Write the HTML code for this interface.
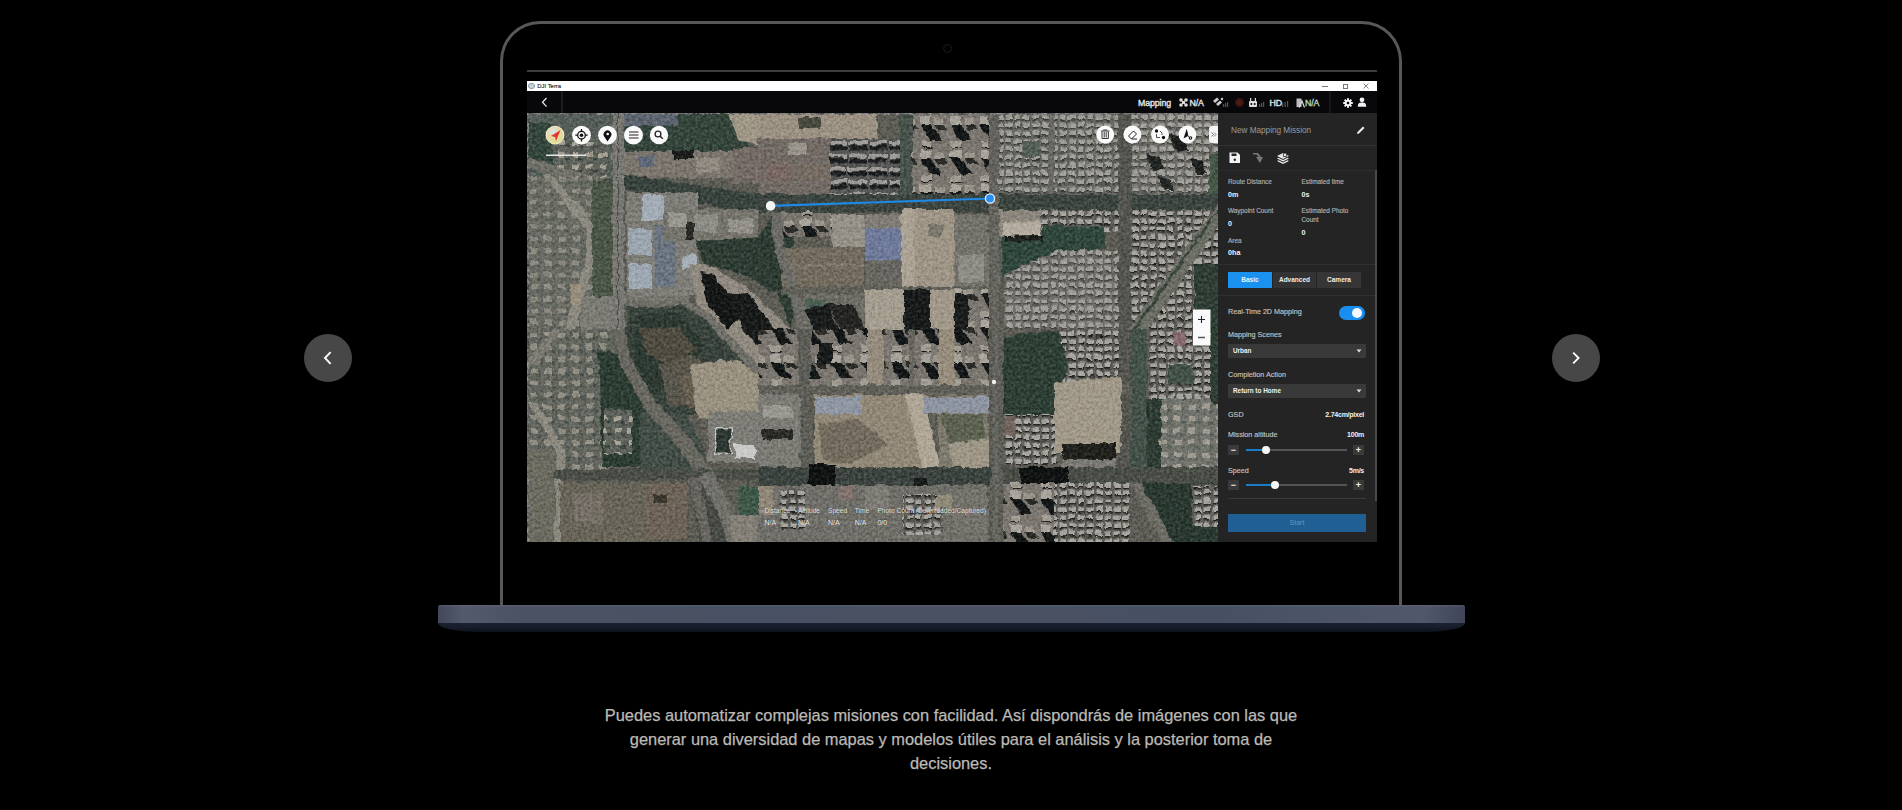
<!DOCTYPE html>
<html><head><meta charset="utf-8">
<style>
*{margin:0;padding:0;box-sizing:border-box}
html,body{width:1902px;height:810px;overflow:hidden;background:#000;font-family:"Liberation Sans",sans-serif}
.abs{position:absolute}
#lid{position:absolute;left:500px;top:21px;width:902px;height:600px;border:3px solid #585858;border-bottom:none;border-radius:40px 40px 0 0}
#cam{position:absolute;left:942.5px;top:44px;width:9px;height:9px;border-radius:50%;border:1.5px solid #1c1c1c}
#topline{position:absolute;left:527px;top:70px;width:850px;height:2px;background:#3c3c3c}
#titlebar{position:absolute;left:527px;top:80.5px;width:850px;height:10.5px;background:#fff}
#toolbar{position:absolute;left:527px;top:91px;width:850px;height:22px;background:#08080b}
#base{position:absolute;left:438px;top:605px;width:1027px;height:18px;background:linear-gradient(180deg,rgba(255,255,255,.07) 0,rgba(255,255,255,.03) 1.5px,rgba(0,0,0,0) 2px),linear-gradient(90deg,#434859 0%,#535a6c 2.5%,#4b5264 8%,#485063 30%,#4a5163 50%,#475063 75%,#50576a 96%,#40455a 100%);border-radius:2px 2px 0 0}
#base2{position:absolute;left:438px;top:623px;width:1027px;height:9px;background:linear-gradient(180deg,#1b2132 0%,#181d2b 50%,#0d1018 100%);border-radius:0 0 40px 40px/0 0 9px 9px}
.arrow{position:absolute;top:334px;width:48px;height:48px;border-radius:50%;background:#474747}
#caption{position:absolute;left:451px;top:703px;width:1000px;text-align:center;color:#bcbab6;font-size:16.4px;line-height:24px;-webkit-text-stroke:0.25px #bcbab6}
.tb{font-size:8.8px;line-height:11px;color:#e6e6e6;-webkit-text-stroke:0.35px #e6e6e6;letter-spacing:-0.1px}
.lbl{font-size:6.4px;line-height:9px;color:#b0b0b0;-webkit-text-stroke:0.15px #b0b0b0}
.val{font-size:7.2px;line-height:10px;color:#f0f0f0;font-weight:bold}
.valr{font-size:7px;line-height:10px;color:#f0f0f0;font-weight:bold;text-align:right;letter-spacing:-0.25px}
.lbl2{font-size:7.2px;line-height:10px;color:#c2c2c2;-webkit-text-stroke:0.15px #c2c2c2}
.tab{height:16px;font-size:6.5px;line-height:16px;text-align:center;color:#eee;font-weight:bold}
.dd{width:138px;height:14px;background:#393939;font-size:6.4px;line-height:14px;padding-left:5px;color:#f0f0f0;font-weight:bold}
.pm{width:11px;height:10.5px;background:#3a3a3a;color:#eee;font-size:9px;line-height:10.5px;text-align:center;font-weight:bold}
.st{font-size:6.6px;line-height:9px;color:#e8e8e8;text-shadow:0 0 1px rgba(0,0,0,.5)}
.sv{font-size:7px;line-height:10px;color:#f2f2f2;text-shadow:0 0 1px rgba(0,0,0,.5)}
</style></head>
<body>
<div id="lid"></div>
<div id="cam"></div>
<div id="topline"></div>
<div id="titlebar"></div>
<div id="toolbar"></div>
<svg class="abs" style="left:527px;top:113px;filter:brightness(0.9) contrast(1.15) saturate(0.85)" width="691" height="429" viewBox="0 0 691 429">
<defs>
  <pattern id="urb" width="9" height="8" patternUnits="userSpaceOnUse">
    <rect width="9" height="8" fill="#6d6c66"/>
    <rect x="0.5" y="0.5" width="6.5" height="4.5" fill="#b7b5af"/>
    <rect x="0.5" y="5" width="6.5" height="1.5" fill="#373834"/>
  </pattern>
  <pattern id="hr" width="30" height="34" patternUnits="userSpaceOnUse">
    <rect width="30" height="34" fill="#8d8880"/>
    <rect x="2" y="2" width="11" height="8" fill="#b9b5ab"/>
    <path d="M2 10 L13 10 L24 26 L12 26Z" fill="#262a2a"/>
    <rect x="16" y="4" width="10" height="6" fill="#aca79c"/>
    <path d="M16 10 L26 10 L30 16 L20 16Z" fill="#3d3e3a"/>
    <rect x="3" y="27" width="10" height="6" fill="#b3ada2"/>
    <path d="M3 33 L13 33 L14 34 L4 34Z" fill="#2e3232"/>
  </pattern>
  <pattern id="slab" width="20" height="13" patternUnits="userSpaceOnUse">
    <rect width="20" height="13" fill="#686867"/>
    <rect x="1" y="1" width="18" height="4.5" fill="#acaba8"/>
    <rect x="1" y="5.5" width="18" height="4" fill="#2e3132"/>
  </pattern>
  <pattern id="villa" width="14" height="12" patternUnits="userSpaceOnUse">
    <rect width="14" height="12" fill="#6f746c"/>
    <rect x="2" y="2" width="7" height="5" fill="#b5b0a2"/>
    <rect x="9" y="7" width="4" height="3" fill="#4e5a53"/>
  </pattern>
  <filter id="photo" x="0" y="0" width="691" height="429" filterUnits="userSpaceOnUse" color-interpolation-filters="sRGB">
    <feTurbulence type="turbulence" baseFrequency="0.08" numOctaves="2" seed="4" result="dt"/>
    <feDisplacementMap in="SourceGraphic" in2="dt" scale="5" xChannelSelector="R" yChannelSelector="G" result="disp"/>
    <feGaussianBlur in="disp" stdDeviation="0.45" result="b"/>
    <feTurbulence type="fractalNoise" baseFrequency="0.35" numOctaves="2" seed="11" result="t"/>
    <feColorMatrix in="t" type="matrix" values="0 0 0 0 0  0 0 0 0 0  0 0 0 0 0  0 0 0 0 1" result="dummy"/>
    <feColorMatrix in="t" type="matrix" values="0.6 0 0 0 0.2  0.6 0 0 0 0.2  0.6 0 0 0 0.2  0 0 0 0 1" result="g"/>
    <feBlend in="g" in2="b" mode="soft-light"/>
  </filter>
  <filter id="tex" x="0" y="0" width="100%" height="100%">
    <feTurbulence type="fractalNoise" baseFrequency="0.9" numOctaves="1" seed="5" result="n"/>
    <feColorMatrix in="n" type="matrix" values="0 0 0 0 0  0 0 0 0 0  0 0 0 0 0  0 0 0 -3 1.6"/>
  </filter>
</defs>
<g filter="url(#photo)">
<rect width="691" height="429" fill="#6f6e65"/>
<!-- ===== T1 (0-230, 0-215) ===== -->
<rect x="0" y="0" width="84" height="66" fill="#66706a"/>
<path d="M0 8 L22 8 L24 50 L0 52Z" fill="#45594e"/>
<rect x="27" y="27" width="53" height="37" fill="url(#villa)"/>
<path d="M0 44 L84 66 L84 76 L0 54Z" fill="#838279"/>
<rect x="0" y="62" width="64" height="153" fill="url(#villa)"/>
<rect x="0" y="62" width="64" height="153" fill="#86857c" opacity="0.5"/>
<path d="M14 60 L22 60 L68 112 L68 145 L46 215 L36 215 L58 145 L58 115Z" fill="#9d9a8f"/>
<rect x="64" y="66" width="20" height="120" fill="#5c6858"/>
<rect x="42" y="170" width="11" height="21" fill="#aa9f8b"/>
<rect x="53" y="183" width="31" height="32" fill="#8e8d84"/>
<rect x="96" y="0" width="124" height="37" fill="#45584d"/>
<rect x="96" y="0" width="54" height="11" fill="#6d7683"/>
<path d="M200 0 L230 0 L230 30 L210 28Z" fill="#b2a895"/>
<rect x="96" y="37" width="108" height="27" fill="#8d877e"/>
<rect x="110" y="42" width="16" height="10" fill="#6f7a8c"/>
<rect x="145" y="36" width="20" height="9" fill="#2d302f"/>
<rect x="168" y="44" width="24" height="14" fill="#a29b90"/>
<rect x="204" y="34" width="26" height="35" fill="#887c76"/>
<path d="M96 60 L230 80 L230 100 L96 76Z" fill="#4a5650"/>
<rect x="98" y="78" width="72" height="104" fill="#908e87"/>
<rect x="114" y="80" width="21" height="26" fill="#b2bdc8"/>
<rect x="100" y="115" width="23" height="26" fill="#abb7c2"/>
<rect x="100" y="150" width="23" height="24" fill="#aeb9c4"/>
<rect x="126" y="110" width="21" height="62" fill="#7b8794"/>
<rect x="155" y="142" width="13" height="13" fill="#b4c0c8"/>
<rect x="135" y="95" width="95" height="32" fill="#88867d"/>
<rect x="140" y="98" width="18" height="14" fill="#a9a79f"/>
<rect x="165" y="100" width="25" height="18" fill="#9e9d96"/>
<rect x="200" y="105" width="25" height="14" fill="#a5a29a"/>
<rect x="158" y="108" width="8" height="18" fill="#3b3c37"/>
<rect x="96" y="182" width="64" height="8" fill="#88877f"/>
<path d="M98 190 L156 189 L180 204 L204 232 L229 257 L262 276 L262 300 L230 310 L180 300 L140 300 L98 296Z" fill="#4a564e"/>
<path d="M110 200 L150 198 L175 230 L160 270 L120 280 L104 250Z" fill="#3e4d44"/>
<path d="M130 250 L165 240 L190 262 L175 290 L140 292Z" fill="#6b685c"/>
<path d="M112 215 L150 212 L168 236 L140 250 L118 240Z" fill="#625e50"/>
<path d="M150 262 L178 258 L186 290 L160 296Z" fill="#7a7060"/>
<path d="M162 250 L210 245 L235 265 L235 305 L170 305Z" fill="#aca28f"/>
<path d="M168 127 L230 122 L246 98 L262 98 L270 175 L262 215 L250 180 L215 160 L175 150Z" fill="#3e4f45"/>
<path d="M160 150 L178 150 L215 170 L262 215 L270 262 L250 268 L225 250 L200 225 L170 190Z" fill="#a29b90"/>
<path d="M172 158 L186 160 L214 200 L200 215 L180 190Z" fill="#262a29"/>
<path d="M200 180 L220 178 L250 220 L236 238 L215 215Z" fill="#2a2e2d"/>
<path d="M232 225 L250 222 L262 250 L252 262Z" fill="#2c302f"/>
<path d="M98 186 L158 185 L184 200 L208 228 L232 253 L264 272 L262 278 L228 260 L202 234 L178 207 L156 192 L98 193Z" fill="#828179"/>
<!-- ===== T2 (230-460, 0-215) ===== -->
<rect x="230" y="0" width="119" height="24" fill="#ada291"/>
<rect x="270" y="3" width="22" height="11" fill="#5a5c50"/>
<rect x="230" y="24" width="72" height="56" fill="#857c76"/>
<rect x="236" y="50" width="30" height="15" fill="#8c7973"/>
<rect x="270" y="50" width="30" height="16" fill="#897e74"/>
<rect x="260" y="28" width="18" height="12" fill="#aaa69c"/>
<rect x="302" y="24" width="69" height="58" fill="url(#slab)"/>
<rect x="371" y="0" width="13" height="90" fill="#58655d"/>
<rect x="384" y="0" width="76" height="82" fill="url(#hr)"/>
<rect x="230" y="80" width="461" height="18" fill="#4d5751"/>
<rect x="248" y="98" width="56" height="24" fill="url(#hr)"/>
<rect x="304" y="100" width="32" height="33" fill="#a6a297"/>
<rect x="254" y="133" width="81" height="39" fill="#857d6e"/>
<rect x="254" y="150" width="81" height="1.5" fill="#989081"/>
<rect x="336" y="114" width="39" height="32" fill="#7f8cb0"/>
<rect x="336" y="100" width="39" height="14" fill="#918e85"/>
<rect x="336" y="146" width="39" height="29" fill="#797871"/>
<rect x="373" y="95" width="13" height="80" fill="#bdb3a3"/>
<rect x="386" y="95" width="40" height="80" fill="#b1a695"/>
<rect x="400" y="110" width="15" height="12" fill="#8e8a7e"/>
<rect x="426" y="100" width="34" height="75" fill="#85847c"/>
<rect x="430" y="140" width="25" height="28" fill="#9f9d95"/>
<path d="M243 98 L253 98 L256 135 L268 165 L282 215 L283 271 L272 271 L270 215 L258 170 L246 136Z" fill="#7e7d76"/>
<rect x="254" y="172" width="206" height="8" fill="#727169"/>
<rect x="275" y="180" width="61" height="35" fill="#7f7e75"/>
<rect x="278" y="185" width="18" height="14" fill="#5d7265"/>
<path d="M276 195 L300 190 L310 215 L285 215Z" fill="#2b2f2e"/>
<path d="M300 190 L325 190 L336 215 L312 215Z" fill="#373834"/>
<rect x="336" y="175" width="42" height="40" fill="#b6ae9e"/>
<rect x="376" y="175" width="26" height="40" fill="#2a2e2d"/>
<rect x="402" y="175" width="24" height="40" fill="#b3a998"/>
<rect x="426" y="175" width="34" height="40" fill="url(#hr)"/>
<rect x="426" y="180" width="14" height="35" fill="#2c302f"/>
<!-- ===== T3 (460-691, 0-215) ===== -->
<rect x="460" y="0" width="11" height="215" fill="#75746e"/>
<rect x="471" y="0" width="50" height="80" fill="url(#urb)"/>
<rect x="494" y="27" width="18" height="16" fill="#53655a"/>
<rect x="521" y="0" width="5" height="80" fill="#72716a"/>
<rect x="526" y="0" width="64" height="80" fill="url(#urb)"/>
<rect x="471" y="0" width="119" height="80" fill="#9d9b94" opacity="0.25"/>
<rect x="590" y="0" width="13" height="429" fill="#676761"/>
<rect x="603" y="0" width="88" height="80" fill="url(#urb)"/>
<rect x="603" y="0" width="88" height="80" fill="#a8a6a0" opacity="0.3"/>
<path d="M640 18 L652 22 L660 36 L648 38Z" fill="#2e3230"/>
<path d="M618 40 L630 42 L636 56 L624 56Z" fill="#333735"/>
<path d="M662 44 L674 46 L678 60 L668 60Z" fill="#303432"/>
<path d="M630 62 L642 64 L646 76 L636 76Z" fill="#353937"/>
<rect x="681" y="40" width="10" height="40" fill="#566a58"/>
<rect x="471" y="96" width="42" height="26" fill="#9e988d"/>
<path d="M476 108 L512 106 L512 120 L480 122Z" fill="#b5ac9e"/>
<rect x="513" y="96" width="77" height="21" fill="url(#urb)"/>
<path d="M473 122 L515 120 L515 111 L577 113 L577 133 L532 146 L510 166 L473 162Z" fill="#3f5a4e"/>
<path d="M474 109 L513 108 L513 121 L476 122Z" fill="#c6bcae"/>
<path d="M476 122 L515 121 L515 127 L476 128Z" fill="#31332e"/>
<path d="M476 160 L530 136 L590 136 L590 215 L476 215Z" fill="url(#urb)"/>
<path d="M476 160 L530 136 L590 136 L590 215 L476 215Z" fill="#a5a39c" opacity="0.3"/>
<rect x="603" y="96" width="88" height="119" fill="url(#urb)"/>
<path d="M691 88 L691 110 L620 215 L600 215Z" fill="#7e8075"/>
<path d="M691 92 L691 96 L608 215 L604 215Z" fill="#4c5a52"/>
<rect x="667" y="150" width="24" height="65" fill="#3f5146"/>
<!-- ===== T4 (0-230, 215-429) ===== -->
<rect x="0" y="215" width="86" height="140" fill="url(#villa)"/>
<rect x="0" y="215" width="86" height="140" fill="#7e8175" opacity="0.35"/>
<path d="M26 215 L34 215 L10 250 L0 252 L0 245Z" fill="#8f8d83"/>
<path d="M0 288 L8 288 L36 335 L34 429 L26 429 L28 338Z" fill="#9d9a8f"/>
<rect x="0" y="335" width="26" height="94" fill="#7d7d70"/>
<path d="M70 235 L92 240 L110 285 L130 310 L130 353 L74 353Z" fill="#3d5045"/>
<rect x="76" y="295" width="28" height="45" fill="url(#villa)"/>
<path d="M112 296 L160 300 L178 340 L170 356 L112 356Z" fill="#546058"/>
<rect x="180" y="297" width="50" height="51" fill="#8f8e87"/>
<rect x="186" y="313" width="18" height="27" fill="#d3d3d0"/>
<rect x="187.5" y="314.5" width="15" height="24" fill="#3d4a43"/>
<rect x="207" y="330" width="21" height="15" fill="#d9dad7"/>
<path d="M84 215 L97 215 L103 247 L128 289 L162 324 L184 356 L206 400 L214 429 L196 429 L190 403 L170 362 L150 332 L118 296 L92 252Z" fill="#7a7971"/>
<rect x="26" y="355" width="204" height="11" fill="#5b6058"/>
<rect x="32" y="369" width="85" height="61" fill="#7a7668"/>
<rect x="45" y="380" width="30" height="30" fill="#878176"/>
<rect x="117" y="369" width="42" height="56" fill="#807566"/>
<rect x="125" y="380" width="14" height="8" fill="#4f4a40"/>
<path d="M159 364 L190 364 L212 429 L172 429Z" fill="#5a5c58"/>
<path d="M170 362 L184 356 L206 400 L214 429 L198 429 L192 404Z" fill="#82817a"/>
<path d="M160 364 L172 364 L184 429 L174 429Z" fill="#77766f"/>
<rect x="210" y="372" width="20" height="29" fill="#4d6b59"/>
<rect x="202" y="401" width="28" height="28" fill="#969187"/>
<!-- ===== T5 (230-460, 215-429) ===== -->
<rect x="230" y="215" width="40" height="56" fill="url(#hr)"/>
<rect x="270" y="215" width="13" height="214" fill="#6f6f69"/>
<rect x="283" y="215" width="56" height="56" fill="url(#hr)"/>
<rect x="290" y="228" width="14" height="22" fill="#2a2e2d"/>
<rect x="339" y="215" width="16" height="56" fill="#a89d8c"/>
<rect x="355" y="215" width="26" height="56" fill="url(#hr)"/>
<rect x="381" y="215" width="5" height="56" fill="#797871"/>
<rect x="386" y="215" width="24" height="56" fill="url(#hr)"/>
<rect x="410" y="215" width="16" height="56" fill="#aa9e8b"/>
<rect x="426" y="215" width="34" height="56" fill="url(#hr)"/>
<rect x="230" y="271" width="461" height="9" fill="#72716a"/>
<rect x="230" y="280" width="42" height="73" fill="#8d8c85"/>
<rect x="234" y="292" width="30" height="12" fill="#aaa8a1"/>
<rect x="234" y="315" width="30" height="10" fill="#3d3e39"/>
<rect x="286" y="281" width="114" height="72" fill="#a49986"/>
<path d="M290 310 L330 305 L360 330 L320 350 L295 345Z" fill="#877d6e"/>
<rect x="287" y="283" width="46" height="17" fill="#a0a8b6"/>
<path d="M377 279 L395 279 L412 356 L394 356Z" fill="#c1b7a5"/>
<rect x="410" y="281" width="50" height="72" fill="#918c7d"/>
<rect x="395" y="283" width="65" height="16" fill="#9ea6b4"/>
<path d="M412 300 L455 300 L458 325 L420 330Z" fill="#6f7460"/>
<path d="M420 330 L460 325 L460 353 L425 353Z" fill="#b0a795"/>
<rect x="230" y="353" width="461" height="18" fill="#4d5651"/>
<rect x="280" y="350" width="27" height="24" fill="#222625"/>
<rect x="386" y="364" width="14" height="10" fill="#2a2e2d"/>
<rect x="230" y="371" width="230" height="58" fill="#828079"/>
<rect x="230" y="371" width="16" height="29" fill="#a39887"/>
<rect x="252" y="375" width="25" height="40" fill="url(#urb)"/>
<rect x="312" y="371" width="13" height="13" fill="#96837e"/>
<rect x="336" y="371" width="24" height="24" fill="#908d86"/>
<rect x="375" y="380" width="40" height="40" fill="url(#urb)"/>
<rect x="408" y="380" width="16" height="14" fill="#a19b86"/>
<rect x="425" y="375" width="35" height="45" fill="#86847c"/>
<!-- ===== T6 (460-691, 215-429) ===== -->
<rect x="463" y="215" width="12" height="214" fill="#707069"/>
<path d="M475 223 L530 215 L540 250 L528 300 L475 300Z" fill="#3e5246"/>
<path d="M530 215 L590 215 L590 268 L560 292 L528 292 L540 250Z" fill="url(#urb)"/>
<rect x="476" y="300" width="53" height="50" fill="url(#urb)"/>
<rect x="476" y="302" width="10" height="20" fill="#85766d"/>
<path d="M526 268 L593 262 L593 340 L526 340Z" fill="#b3a997"/>
<rect x="534" y="329" width="53" height="16" fill="#33342f"/>
<rect x="534" y="345" width="53" height="8" fill="#8d8b84"/>
<rect x="603" y="215" width="16" height="138" fill="#54655b"/>
<rect x="619" y="215" width="72" height="69" fill="url(#urb)"/>
<rect x="645" y="218" width="12" height="14" fill="#9b7c80"/>
<rect x="640" y="250" width="25" height="20" fill="#53655a"/>
<rect x="619" y="284" width="14" height="69" fill="#3e4f45"/>
<rect x="633" y="284" width="58" height="69" fill="url(#villa)"/>
<rect x="633" y="284" width="58" height="69" fill="#a6a59f" opacity="0.35"/>
<rect x="475" y="353" width="216" height="16" fill="#5b6058"/>
<rect x="492" y="353" width="48" height="19" fill="#222625"/>
<rect x="475" y="369" width="51" height="61" fill="url(#hr)"/>
<rect x="526" y="369" width="77" height="61" fill="url(#urb)"/>
<path d="M603 369 L614 369 L645 429 L633 429Z" fill="#7e7d75"/>
<path d="M614 369 L660 369 L691 410 L691 429 L645 429Z" fill="#3a4c42"/>
<rect x="664" y="372" width="27" height="40" fill="url(#urb)"/>
<rect x="682" y="150" width="9" height="140" fill="#3f5146"/>
<!-- roads over -->
<rect x="84" y="0" width="12" height="215" fill="#8a8984"/>
<rect x="89" y="0" width="1" height="215" fill="#61605a"/>
<rect x="466" y="96" width="4" height="333" fill="#807f79" opacity="0.5"/>
</g>
<rect width="691" height="429" fill="#000" filter="url(#tex)" opacity="0.1"/>
</svg>

<!-- map overlays -->
<svg class="abs" style="left:527px;top:113px" width="691" height="429" viewBox="527 113 691 429">
  <line x1="770.6" y1="205.9" x2="990" y2="198.5" stroke="#1e8ae6" stroke-width="2.2"/>
  <circle cx="770.6" cy="205.9" r="4.8" fill="#f4f4f4"/>
  <circle cx="990" cy="198.5" r="4.6" fill="#2a8ff0" stroke="#e8f2ff" stroke-width="1.3"/>
  <circle cx="994" cy="382" r="2.2" fill="#f0f0f0"/>
  <line x1="546" y1="155.3" x2="586" y2="155.3" stroke="#e6e6e6" stroke-width="1.4"/>
  <g fill="#fafafa">
    <circle cx="555" cy="135.2" r="9.4" fill="#f3ecc8"/>
    <circle cx="581.5" cy="135.2" r="9.4"/>
    <circle cx="607.5" cy="135.2" r="9.4"/>
    <circle cx="633.5" cy="135.2" r="9.4"/>
    <circle cx="659" cy="135" r="9.2"/>
    <circle cx="1105.2" cy="134.5" r="9"/>
    <circle cx="1132.4" cy="134.5" r="9"/>
    <circle cx="1160" cy="134.5" r="9"/>
    <circle cx="1187.4" cy="134.5" r="9"/>
  </g>
  <circle cx="555" cy="135.2" r="8.5" fill="url(#cmp)"/>
  <defs><radialGradient id="cmp" cx="0.4" cy="0.3" r="0.8"><stop offset="0" stop-color="#d9e4f0"/><stop offset="0.5" stop-color="#e8d9a0"/><stop offset="1" stop-color="#d8df9a"/></radialGradient></defs>
  <path d="M560.5 130 L551 136 L555 137 L556 141 Z" fill="#e0382c"/>
  <!-- locate -->
  <g stroke="#111" fill="none"><circle cx="581.5" cy="135.2" r="3.8" stroke-width="1.3"/><path d="M581.5 129 V131.4 M581.5 139 V141.4 M575.3 135.2 H577.7 M585.3 135.2 H587.7" stroke-width="1.3"/></g>
  <circle cx="581.5" cy="135.2" r="1.8" fill="#111"/>
  <!-- pin -->
  <path d="M607.5 141.5 L604.2 136.5 A3.9 3.9 0 1 1 610.8 136.5 Z" fill="#111"/><circle cx="607.7" cy="134" r="1.3" fill="#fafafa"/>
  <!-- list -->
  <g stroke="#222" stroke-width="1.1"><path d="M629 132 H638.5 M629 135 H638.5 M629 138 H638.5"/></g>
  <!-- search -->
  <circle cx="658" cy="134" r="2.9" fill="none" stroke="#222" stroke-width="1.3"/><path d="M660.2 136.2 L662.8 138.8" stroke="#222" stroke-width="1.5"/>
  <!-- trash -->
  <g fill="none" stroke="#222" stroke-width="0.9"><path d="M1102 131.5 V138.5 H1108.4 V131.5 M1101 131 H1109.4 M1103.2 130 H1107.2 M1104.2 132 V137.5 M1106.2 132 V137.5"/></g>
  <!-- eraser -->
  <g fill="none" stroke="#222" stroke-width="1"><path d="M1128.5 136 L1133.5 131 L1136.5 134 L1131.5 139 Z M1131.5 139 H1137"/></g>
  <!-- route -->
  <g fill="#111"><circle cx="1156.5" cy="131" r="1.7"/><circle cx="1163.5" cy="137.5" r="1.7"/></g>
  <path d="M1160 131 L1162 133 V135 M1156.5 134 V137.5 H1160" fill="none" stroke="#222" stroke-width="0.8"/>
  <!-- A icon -->
  <path d="M1186.5 129.5 L1183.5 138.5 L1188 136 Z" fill="#111"/><path d="M1186.5 129.5 L1188 136 L1189 137" stroke="#111" fill="none" stroke-width="0.8"/><circle cx="1190.5" cy="138" r="1.8" fill="#111"/><circle cx="1190.5" cy="138" r="0.7" fill="#fafafa"/>
  <!-- >> tab -->
  <path d="M1218 126 H1212 Q1209 126 1209 129 V140 Q1209 143 1212 143 H1218 Z" fill="#f4f4f4"/>
  <path d="M1211.5 132.5 L1213.5 134.5 L1211.5 136.5 M1214 132.5 L1216 134.5 L1214 136.5" fill="none" stroke="#555" stroke-width="0.8"/>
  <!-- zoom control -->
  <rect x="1193" y="309.5" width="17.5" height="36" fill="#fafafa"/>
  <path d="M1198 319.5 H1205 M1201.5 316 V323" stroke="#222" stroke-width="1.1"/><path d="M1198 337.5 H1205" stroke="#555" stroke-width="1.5"/>
</svg>
<div class="abs st" style="left:764.5px;top:506px">Distance</div>
<div class="abs st" style="left:798px;top:506px">Altitude</div>
<div class="abs st" style="left:828px;top:506px">Speed</div>
<div class="abs st" style="left:854.8px;top:506px">Time</div>
<div class="abs st" style="left:877.4px;top:506px">Photo Count (Downloaded/Captured)</div>
<div class="abs sv" style="left:764.5px;top:517.5px">N/A</div>
<div class="abs sv" style="left:798px;top:517.5px">N/A</div>
<div class="abs sv" style="left:828px;top:517.5px">N/A</div>
<div class="abs sv" style="left:854.8px;top:517.5px">N/A</div>
<div class="abs sv" style="left:877.4px;top:517.5px">0/0</div>

<!-- panel -->
<div class="abs" style="left:1218px;top:113px;width:159px;height:429px;background:#242424"></div>
<div class="abs" style="left:1231px;top:126px;font-size:8.2px;line-height:10px;color:#9c9c9c">New Mapping Mission</div>
<svg class="abs" style="left:1356px;top:125px" width="10" height="10"><path d="M1 9 L1.5 7 L7 1.5 L8.5 3 L3 8.5 Z" fill="#eee"/></svg>
<div class="abs" style="left:1218px;top:145px;width:159px;height:1px;background:#333"></div>
<svg class="abs" style="left:1229px;top:152px" width="12" height="12"><path d="M0.5 0.5 H8.5 L11 3 V11 H0.5 Z" fill="#f4f4f4"/><rect x="2.5" y="1.5" width="5" height="2.5" fill="#242424"/><circle cx="5.8" cy="7.8" r="1.2" fill="#242424"/></svg>
<svg class="abs" style="left:1252px;top:152px" width="13" height="12"><path d="M1 1 L6 1 L9 5 L11 5 L8 11 L4 5 L6.5 5 L4.5 2.5 L1 2.5 Z" fill="#777"/></svg>
<svg class="abs" style="left:1276px;top:151px" width="14" height="13"><g fill="#e8e8e8"><path d="M1 5 L7 2 L13 5 L7 8 Z"/><path d="M1 7.5 L2.5 6.8 L7 9 L11.5 6.8 L13 7.5 L7 10.5 Z"/><path d="M1 10 L2.5 9.3 L7 11.5 L11.5 9.3 L13 10 L7 13 Z"/></g><circle cx="9" cy="4" r="2.2" fill="#242424"/><circle cx="9" cy="4" r="1.4" fill="#e8e8e8"/></svg>
<div class="abs" style="left:1218px;top:169.5px;width:157px;height:1px;background:#2c2c2c"></div>
<div class="abs" style="left:1375px;top:170px;width:2px;height:331px;background:#4a4a4a"></div>
<div class="abs lbl" style="left:1228px;top:177px">Route Distance</div>
<div class="abs val" style="left:1228px;top:189.5px">0m</div>
<div class="abs lbl" style="left:1301.5px;top:177px">Estimated time</div>
<div class="abs val" style="left:1301.5px;top:189.5px">0s</div>
<div class="abs lbl" style="left:1228px;top:206px">Waypoint Count</div>
<div class="abs val" style="left:1228px;top:218.5px">0</div>
<div class="abs lbl" style="left:1301.5px;top:206px">Estimated Photo</div>
<div class="abs lbl" style="left:1301.5px;top:215px">Count</div>
<div class="abs val" style="left:1301.5px;top:228px">0</div>
<div class="abs lbl" style="left:1228px;top:235.5px">Area</div>
<div class="abs val" style="left:1228px;top:247.5px">0ha</div>
<div class="abs" style="left:1218px;top:264px;width:157px;height:1px;background:#303030"></div>
<div class="abs tab" style="left:1228px;top:272px;width:44px;background:#1b91ef;color:#e6f3ff">Basic</div>
<div class="abs tab" style="left:1273px;top:272px;width:43px;background:#333">Advanced</div>
<div class="abs tab" style="left:1317px;top:272px;width:44px;background:#363636">Camera</div>
<div class="abs" style="left:1218px;top:295px;width:157px;height:1px;background:#303030"></div>
<div class="abs lbl2" style="left:1228px;top:307px">Real-Time 2D Mapping</div>
<div class="abs" style="left:1339px;top:306px;width:25.5px;height:13.5px;border-radius:7px;background:#1a8df0"></div>
<div class="abs" style="left:1352px;top:308px;width:10px;height:10px;border-radius:50%;background:#f4f8ff"></div>
<div class="abs lbl2" style="left:1228px;top:330px">Mapping Scenes</div>
<div class="abs dd" style="left:1228px;top:344px">Urban</div>
<div class="abs lbl2" style="left:1228px;top:369.5px">Completion Action</div>
<div class="abs dd" style="left:1228px;top:384px">Return to Home</div>
<svg class="abs" style="left:1356px;top:349px" width="6" height="4"><path d="M0.5 0.5 H5.5 L3 3.5Z" fill="#ddd"/></svg>
<svg class="abs" style="left:1356px;top:389px" width="6" height="4"><path d="M0.5 0.5 H5.5 L3 3.5Z" fill="#ddd"/></svg>
<div class="abs lbl2" style="left:1228px;top:409.5px">GSD</div>
<div class="abs valr" style="left:1300px;top:409.5px;width:64px">2.74cm/pixel</div>
<div class="abs lbl2" style="left:1228px;top:430px">Mission altitude</div>
<div class="abs valr" style="left:1300px;top:430px;width:64px">100m</div>
<div class="abs pm" style="left:1228px;top:444.5px">&#8722;</div>
<div class="abs" style="left:1245.5px;top:449px;width:101px;height:2px;background:#555"></div>
<div class="abs" style="left:1245.5px;top:449px;width:20px;height:2px;background:#1b7cc8"></div>
<div class="abs" style="left:1261.5px;top:446px;width:8px;height:8px;border-radius:50%;background:#f6f6f6"></div>
<div class="abs pm" style="left:1353px;top:444.5px">+</div>
<div class="abs lbl2" style="left:1228px;top:465.5px">Speed</div>
<div class="abs valr" style="left:1300px;top:465.5px;width:64px">5m/s</div>
<div class="abs pm" style="left:1228px;top:479.5px">&#8722;</div>
<div class="abs" style="left:1245.5px;top:484px;width:101px;height:2px;background:#555"></div>
<div class="abs" style="left:1245.5px;top:484px;width:30px;height:2px;background:#1b7cc8"></div>
<div class="abs" style="left:1271px;top:481.3px;width:8px;height:8px;border-radius:50%;background:#f6f6f6"></div>
<div class="abs pm" style="left:1353px;top:479.5px">+</div>
<div class="abs" style="left:1228px;top:498px;width:138px;height:1px;background:#3a3a3a"></div>
<div class="abs" style="left:1228px;top:513.5px;width:138px;height:18.5px;background:#1f5f93;color:#6e93b5;font-size:7px;line-height:18.5px;text-align:center">Start</div>

<!-- titlebar contents -->
<div class="abs" style="left:528px;top:82.8px;width:6.5px;height:6.5px;border-radius:50%;background:#c9d3da;border:1.2px solid #8a9aa6"></div>
<div class="abs" style="left:537.3px;top:81.6px;font-size:5.9px;line-height:9px;color:#2a2a2a;-webkit-text-stroke:0.15px #2a2a2a">DJI Terra</div>
<div class="abs" style="left:1322px;top:85.5px;width:6px;height:1px;background:#777"></div>
<div class="abs" style="left:1343px;top:83.5px;width:5px;height:5px;border:1px solid #777"></div>
<svg class="abs" style="left:1363px;top:83px" width="6" height="6"><path d="M0.5 0.5L5.5 5.5M5.5 0.5L0.5 5.5" stroke="#777" stroke-width="0.9"/></svg>
<!-- toolbar -->
<svg class="abs" style="left:540px;top:97px" width="10" height="11"><path d="M6.5 1 L2.5 5.3 L6.5 9.6" fill="none" stroke="#e8e8e8" stroke-width="1.3"/></svg>
<div class="abs" style="left:561px;top:91px;width:2px;height:22px;background:#1c1c1e"></div>
<div class="abs tb" style="left:1138px;top:98px">Mapping</div>
<svg class="abs" style="left:1179px;top:98px" width="9" height="9"><g fill="#ddd"><circle cx="2" cy="2" r="1.8"/><circle cx="7" cy="2" r="1.8"/><circle cx="2" cy="7" r="1.8"/><circle cx="7" cy="7" r="1.8"/><rect x="3" y="3" width="3" height="3"/></g></svg>
<div class="abs tb" style="left:1189.5px;top:98px">N/A</div>
<svg class="abs" style="left:1212px;top:97px" width="18" height="11"><g fill="#ccc"><path d="M1 4 L5 0.5 L7 2.5 L3 6 Z"/><path d="M4 7 L8 3.5 L10 5.5 L6 9 Z"/><circle cx="10" cy="2" r="1.2"/></g><g fill="#555"><rect x="11" y="7" width="1.2" height="3"/><rect x="13" y="6" width="1.2" height="4"/><rect x="15" y="5" width="1.2" height="5"/></g></svg>
<div class="abs" style="left:1235px;top:98px;width:9px;height:9px;border-radius:50%;background:radial-gradient(circle,#5a1d14 0%,#3a1410 60%,#0a0808 100%)"></div>
<svg class="abs" style="left:1248px;top:97px" width="18" height="11"><g fill="#ddd"><rect x="1" y="4" width="8" height="6" rx="1"/><rect x="2" y="1" width="1.2" height="3"/><rect x="6.8" y="1" width="1.2" height="3"/></g><g fill="#111"><circle cx="3.3" cy="7" r="1"/><circle cx="6.7" cy="7" r="1"/></g><g fill="#555"><rect x="11" y="7" width="1.2" height="3"/><rect x="13" y="6" width="1.2" height="4"/><rect x="15" y="5" width="1.2" height="5"/></g></svg>
<div class="abs tb" style="left:1269.5px;top:98px">HD</div>
<svg class="abs" style="left:1281px;top:100px" width="9" height="7"><g fill="#555"><rect x="1" y="3" width="1.2" height="4"/><rect x="3.5" y="2" width="1.2" height="5"/><rect x="6" y="1" width="1.2" height="6"/></g></svg>
<svg class="abs" style="left:1296px;top:97.5px" width="9" height="10"><g fill="#bbb"><rect x="0.5" y="0.5" width="5" height="8.5"/></g><path d="M3 9.5 L6 3 L8.5 9.5" fill="none" stroke="#ddd" stroke-width="1.2"/></svg>
<div class="abs tb" style="left:1305px;top:98px;color:#3fb37a">N/A</div>
<div class="abs" style="left:1329px;top:91px;width:2px;height:22px;background:#161618"></div>
<svg class="abs" style="left:1342.5px;top:97.5px" width="10" height="10"><g transform="translate(5 5)" fill="#f0f0f0"><circle r="3.3"/><g><rect x="-1" y="-4.8" width="2" height="9.6"/><rect x="-1" y="-4.8" width="2" height="9.6" transform="rotate(45)"/><rect x="-1" y="-4.8" width="2" height="9.6" transform="rotate(90)"/><rect x="-1" y="-4.8" width="2" height="9.6" transform="rotate(135)"/></g><circle r="1.3" fill="#08080c"/></g></svg>
<svg class="abs" style="left:1356.5px;top:97px" width="10" height="10"><g fill="#f0f0f0"><circle cx="5" cy="2.8" r="2.4"/><path d="M0.8 9.8 C0.8 6 2.5 5.5 5 5.5 C7.5 5.5 9.2 6 9.2 9.8 Z"/></g></svg>

<div id="base"></div>
<div id="base2"></div>
<div class="arrow" style="left:304px"><svg width="48" height="48"><path d="M26.6 18.2 L21 24 L26.6 29.8" fill="none" stroke="#fff" stroke-width="1.9"/></svg></div>
<div class="arrow" style="left:1552px"><svg width="48" height="48"><path d="M21.2 18.6 L26.6 24 L21.2 29.4" fill="none" stroke="#fff" stroke-width="1.8"/></svg></div>
<div id="caption">Puedes automatizar complejas misiones con facilidad. Así dispondrás de imágenes con las que<br>generar una diversidad de mapas y modelos útiles para el análisis y la posterior toma de<br>decisiones.</div>
</body></html>
